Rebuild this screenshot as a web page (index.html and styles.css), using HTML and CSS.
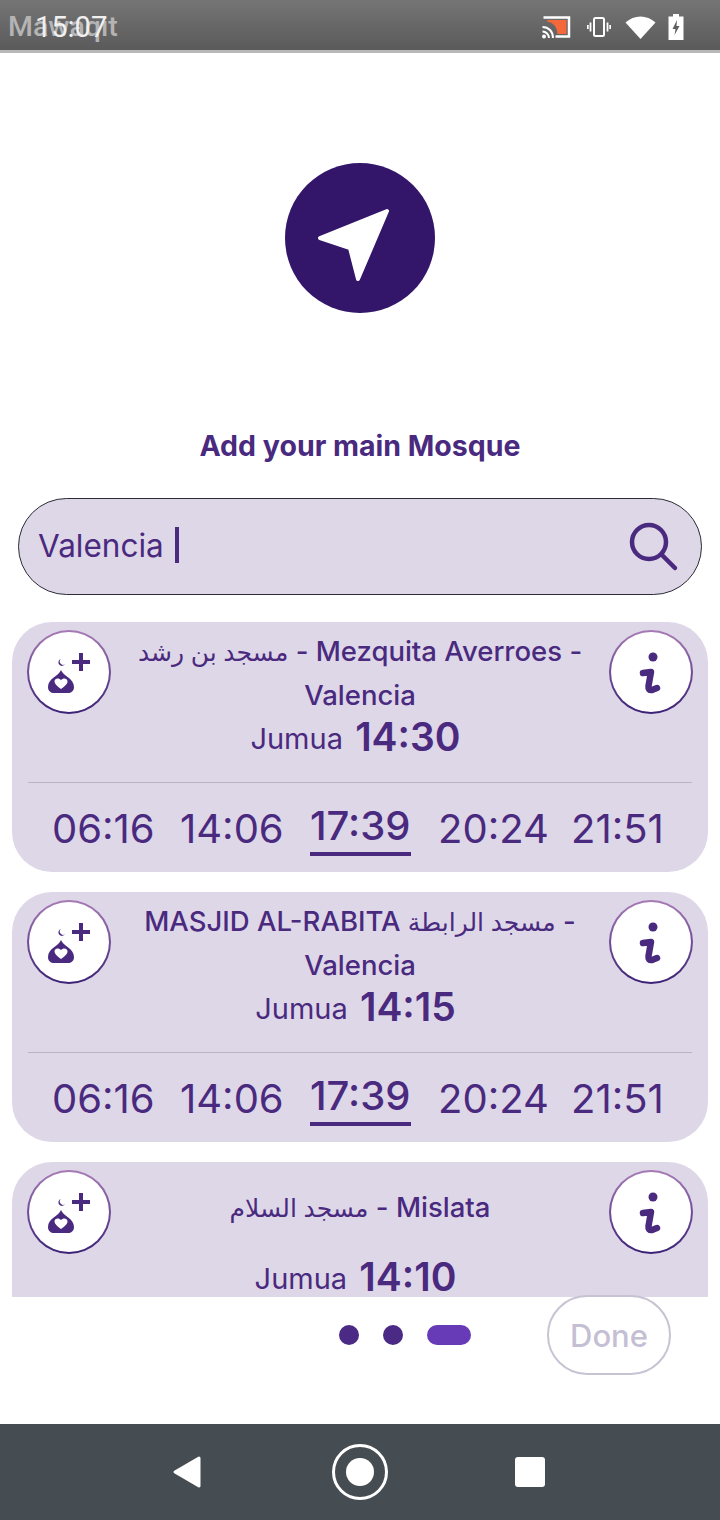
FILE: index.html
```html
<!DOCTYPE html>
<html>
<head>
    <title>Mawaqit</title>
    <link rel="stylesheet" href="styles.css">
</head>
<body>
    <div class="screen">
        <!-- Status bar -->
        <header class="status">
            <div class="status-text">
                <span class="app-name">Mawaqit</span>
                <span class="clock">15:07</span>
            </div>
            <div class="status-icons">
                <svg class="cast-icon" width="31" height="24" viewBox="0 0 30 24">
                    <path d="M2 2.500H27.500V21.500H14" fill="none" stroke="#fff" stroke-width="2.500"/>
                    <path d="M6 5H25V19H16C15.500 12 12 7.500 6 7Z" fill="#f4683a"/>
                    <path d="M1 12C7 12 11.500 16.500 11.500 23M1 16.500C4.500 16.500 7.500 19.500 7.500 23" fill="none" stroke="#fff" stroke-width="2"/>
                    <circle cx="2.500" cy="21.500" r="2" fill="#fff"/>
                </svg>
                <svg class="vibrate-icon" width="24" height="24" viewBox="0 0 24 24">
                    <rect x="7" y="3" width="10" height="18" rx="1.500" fill="none" stroke="#fff" stroke-width="2"/>
                    <path d="M3.500 7.500V16.500M20.500 7.500V16.500M0.800 10V14M23.200 10V14" stroke="#fff" stroke-width="1.800"/>
                </svg>
                <svg width="31" height="24" viewBox="0 0 31 24">
                    <path d="M0.500 7.500C9 -0.500 22 -0.500 30.500 7.500L15.500 24Z" fill="#fff"/>
                </svg>
                <svg width="16" height="26" viewBox="0 0 16 26">
                    <path d="M5 0H11V2.500H15.500V26H0.500V2.500H5Z" fill="#fff"/>
                    <path d="M9 6L4.500 15H7.500L6.500 21L11.500 12H8.500Z" fill="#5e5e5e"/>
                </svg>
            </div>
        </header>

        <section class="hero">
            <svg class="hero-icon" width="150" height="150" viewBox="0 0 150 150">
                <circle cx="75" cy="75" r="75" fill="#33156a"/>
                <path d="M102 48L35 75L65 85L73 116Z" fill="#fff" stroke="#fff" stroke-width="4" stroke-linejoin="round"/>
            </svg>
            <h1>Add your main Mosque</h1>
        </section>

        <div class="search">
            <span class="search-text">Valencia</span>
            <span class="caret"></span>
            <svg class="search-icon" width="52" height="52" viewBox="0 0 52 52">
                <circle cx="21" cy="21" r="17" fill="none" stroke="#4a2a7f" stroke-width="4.500"/>
                <path d="M33.500 33.500L47 47" stroke="#4a2a7f" stroke-width="4.500" stroke-linecap="round"/>
            </svg>
        </div>

        <!-- Mosque list, the last card is cut off by the footer -->
        <main class="list">
            <article class="card">
                <div class="card-head">
                    <button class="round-btn">
                        <svg width="80" height="80" viewBox="0 0 80 80"><use href="#mosque-add"/></svg>
                    </button>
                    <div class="name"><span class="ar">مسجد بن رشد</span> - Mezquita Averroes - Valencia</div>
                    <button class="round-btn">
                        <svg width="80" height="80" viewBox="0 0 80 80"><use href="#info"/></svg>
                    </button>
                </div>
                <div class="jumua">Jumua <b>14:30</b></div>
                <div class="times">
                    <span>06:16</span><span>14:06</span><span class="next">17:39</span><span>20:24</span><span>21:51</span>
                </div>
            </article>

            <article class="card">
                <div class="card-head">
                    <button class="round-btn">
                        <svg width="80" height="80" viewBox="0 0 80 80"><use href="#mosque-add"/></svg>
                    </button>
                    <div class="name">MASJID AL-RABITA <span class="ar">مسجد الرابطة</span> - Valencia</div>
                    <button class="round-btn">
                        <svg width="80" height="80" viewBox="0 0 80 80"><use href="#info"/></svg>
                    </button>
                </div>
                <div class="jumua">Jumua <b>14:15</b></div>
                <div class="times">
                    <span>06:16</span><span>14:06</span><span class="next">17:39</span><span>20:24</span><span>21:51</span>
                </div>
            </article>

            <article class="card">
                <div class="card-head">
                    <button class="round-btn">
                        <svg width="80" height="80" viewBox="0 0 80 80"><use href="#mosque-add"/></svg>
                    </button>
                    <div class="name name-single"><span class="ar">مسجد السلام</span> - Mislata</div>
                    <button class="round-btn">
                        <svg width="80" height="80" viewBox="0 0 80 80"><use href="#info"/></svg>
                    </button>
                </div>
                <div class="jumua">Jumua <b>14:10</b></div>
            </article>
        </main>

        <footer class="footer">
            <div class="dots">
                <span class="dot"></span>
                <span class="dot"></span>
                <span class="dot dot-active"></span>
            </div>
            <button class="done">Done</button>
        </footer>

        <nav class="navbar">
            <svg width="30" height="34" viewBox="0 0 30 34">
                <path d="M27 3L3 17L27 31Z" fill="#fff" stroke="#fff" stroke-width="3" stroke-linejoin="round"/>
            </svg>
            <svg width="58" height="58" viewBox="0 0 58 58">
                <circle cx="29" cy="29" r="26.500" fill="none" stroke="#fff" stroke-width="3"/>
                <circle cx="29" cy="29" r="14" fill="#fff"/>
            </svg>
            <span class="nav-square"></span>
        </nav>
    </div>

    <!-- Shared icons -->
    <svg class="icon-defs" width="0" height="0">
        <defs>
            <g id="mosque-add" transform="translate(0 3)">
                <path d="M52 18V36M43 27H61" stroke="#4a2a7f" stroke-width="4"/>
                <path d="M32 24A3.500 3.500 0 1 0 36 29A3 3 0 0 1 32 24Z" fill="#4a2a7f"/>
                <path d="M32 35C34 41 45 43 45 52C45 56 42 58 39 58H25C22 58 19 56 19 52C19 43 30 41 32 35Z" fill="#4a2a7f"/>
                <path d="M32 54C28 51 25.500 49 25.500 46.500C25.500 43 30 42.500 32 45C34 42.500 38.500 43 38.500 46.500C38.500 49 36 51 32 54Z" fill="#fff"/>
            </g>
            <g id="info">
                <circle cx="42" cy="25" r="4.500" fill="#4a2a7f"/>
                <path d="M32 41L40 40L37.500 54Q37 58.500 41 58L46 56" fill="none" stroke="#4a2a7f" stroke-width="6.500" stroke-linecap="round" stroke-linejoin="round"/>
            </g>
        </defs>
    </svg>
</body>
</html>
```

FILE: styles.css
```css
* {
    box-sizing: border-box;
}

body {
    margin: 0;
    font-family: Inter, "DejaVu Sans", sans-serif;
    background-color: #fff;
    color: #4a2a7f;
}

.screen {
    width: 720px;
    height: 1520px;
    display: flex;
    flex-direction: column;
    overflow: hidden;
}

/* Status bar */
.status {
    flex: none;
    height: 53px;
    padding: 3px 36px 0 8px;
    display: flex;
    justify-content: space-between;
    align-items: center;
    background: linear-gradient(#757575, #5a5a5a);
    border-bottom: 3px solid #b8b8b8;
    font-family: Roboto, sans-serif;
}

.status-text {
    display: grid;
}

.app-name,
.clock {
    grid-area: 1 / 1;
}

.app-name {
    color: #b4b4b4;
    font-size: 28.500px;
    font-weight: 500;
}

.clock {
    margin-left: 27px;
    color: #f0f0f0;
    font-size: 29px;
}

.status-icons {
    display: flex;
    align-items: center;
    gap: 12px;
}

.cast-icon {
    margin-right: 3px;
}

.vibrate-icon {
    margin-right: 2px;
}

/* Location icon and title */
.hero {
    flex: none;
    height: 445px;
    padding-top: 110px;
    display: flex;
    flex-direction: column;
    align-items: center;
}

.hero-icon {
    display: block;
}

.hero h1 {
    margin: 117px 0 0;
    font-size: 28.500px;
    line-height: 32px;
    font-weight: 700;
}

/* Search box */
.search {
    flex: none;
    width: 684px;
    height: 97px;
    margin-left: 18px;
    padding: 0 21px 3px 19px;
    display: flex;
    align-items: center;
    background-color: #ded7e8;
    border: 1px solid #2c2c34;
    border-radius: 49px;
}

.search-text {
    font-size: 31.500px;
}

.caret {
    width: 4px;
    height: 36px;
    margin-left: 11px;
    background-color: #4a2a7f;
}

.search-icon {
    margin-left: auto;
    margin-top: 3px;
}

/* Mosque cards */
.list {
    flex: none;
    height: 702px;
    margin: 0 12px;
    padding-top: 27px;
    display: flex;
    flex-direction: column;
    gap: 20px;
    overflow: hidden;
}

.card {
    flex: none;
    height: 250px;
    padding: 8px 15px 0;
    background-color: #ded7e8;
    border-radius: 40px;
}

.card-head {
    display: grid;
    grid-template-columns: 84px 1fr 84px;
    height: 87px;
}

.round-btn {
    width: 84px;
    height: 84px;
    padding: 0;
    border: 2px solid transparent;
    border-radius: 50%;
    background: linear-gradient(#fff, #fff) padding-box, linear-gradient(#a77bb5, #3b2176) border-box;
}

.round-btn svg {
    display: block;
}

.name {
    height: 88px;
    margin-top: -1px;
    padding: 0 14px;
    font-size: 27.500px;
    line-height: 44px;
    font-weight: 500;
    text-align: center;
}

.name .ar {
    font-size: 25px;
    line-height: 1;
}

.name-single {
    padding-top: 16px;
}

.jumua {
    height: 44px;
    padding-right: 9px;
    font-size: 29px;
    line-height: 43px;
    text-align: center;
    word-spacing: 4px;
}

.jumua b {
    font-size: 39px;
    line-height: 1;
    font-weight: 600;
    vertical-align: -2px;
}

.times {
    margin: 21px 1px 0;
    padding: 19px 0 0 24px;
    display: grid;
    grid-template-columns: 128px 130px 128px 133px auto;
    justify-items: start;
    border-top: 1px solid #b9b4c2;
    font-size: 40px;
    line-height: 54px;
}

.times .next {
    height: 57px;
    margin-top: -3px;
    font-weight: 500;
    border-bottom: 4px solid #4a2a7f;
}

/* Footer with page dots */
.footer {
    flex: none;
    height: 127px;
    padding: 0 49px 0 339px;
    display: flex;
    justify-content: space-between;
    align-items: flex-start;
}

.dots {
    margin-top: 28px;
    display: flex;
    gap: 24px;
}

.dot {
    width: 20px;
    height: 20px;
    border-radius: 10px;
    background-color: #4a2a85;
}

.dot-active {
    width: 44px;
    background-color: #673ab7;
}

.done {
    width: 124px;
    height: 80px;
    margin-top: -2px;
    padding: 0;
    background-color: #fff;
    border: 2px solid #c8c3d3;
    border-radius: 40px;
    color: #c5bfd4;
    font-family: Inter, sans-serif;
    font-size: 31px;
    font-weight: 500;
    position: relative;
}

/* Android navigation bar */
.navbar {
    flex: none;
    height: 96px;
    padding-left: 172px;
    display: flex;
    align-items: center;
    background-color: #454c52;
}

.navbar svg:nth-child(2) {
    margin-left: 129px;
}

.nav-square {
    width: 30px;
    height: 30px;
    margin-left: 126px;
    background-color: #fff;
    border-radius: 3px;
}

.icon-defs {
    position: absolute;
}
```
